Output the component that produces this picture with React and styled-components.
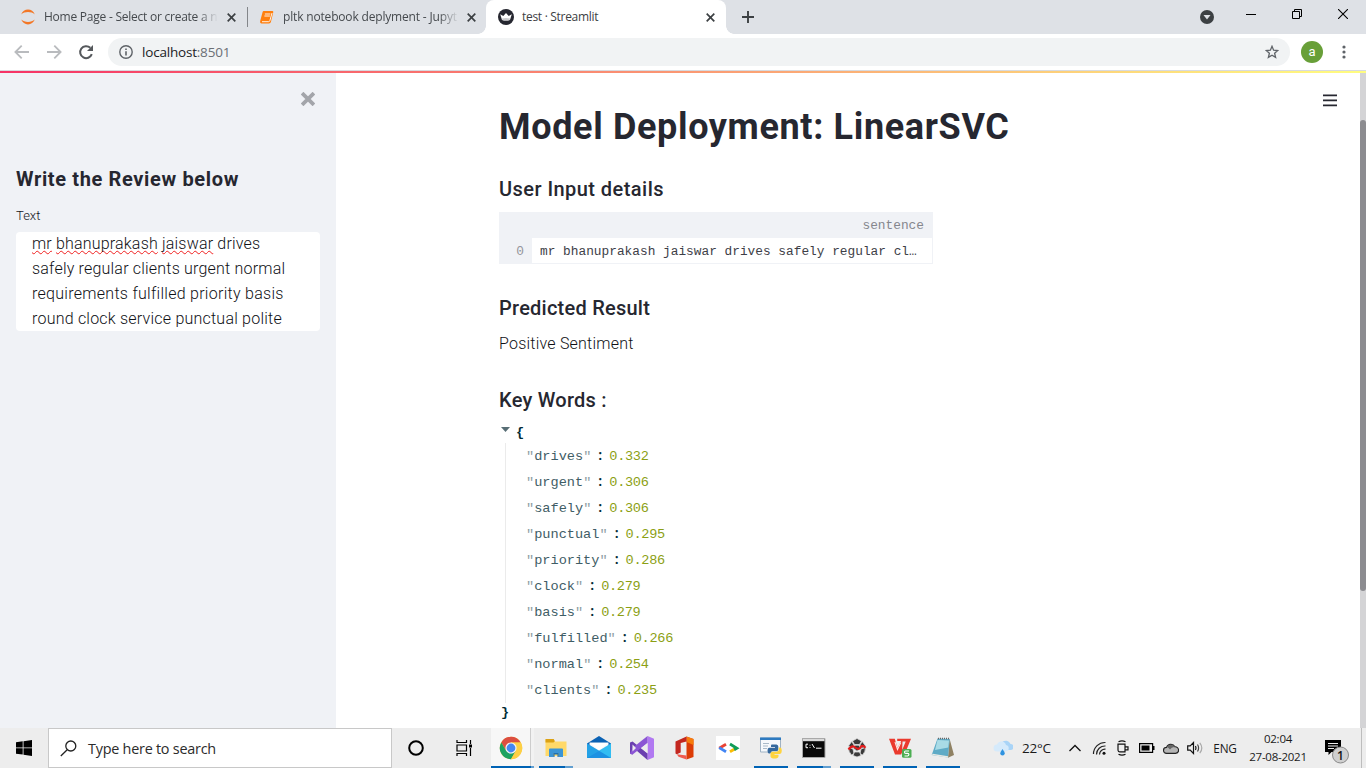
import React from 'react';
import styled, { createGlobalStyle, css } from 'styled-components';

const Global = createGlobalStyle`
  * { box-sizing: border-box; }
  body { margin: 0; overflow: hidden; background: #fff; }
  svg { display: block; flex: none; }
`;

const ui = css`font-family: 'Open Sans', 'Noto Sans', sans-serif;`;
const sans = css`font-family: Roboto, 'Noto Sans', sans-serif; color: #262730;`;
const mono = css`font-family: 'Liberation Mono', monospace;`;

const Screen = styled.div`
  width: 1366px;
  height: 768px;
  display: flex;
  flex-direction: column;
  overflow: hidden;
`;

/* ---------- browser ---------- */
const TabStrip = styled.header`
  ${ui}
  height: 34px;
  flex: none;
  display: flex;
  align-items: stretch;
  background: #dee1e6;
  font-size: 12px;
  color: #45494d;
`;
const Tab = styled.div`
  position: relative;
  width: ${p => p.$width}px;
  padding-left: ${p => p.$pad}px;
  display: flex;
  align-items: center;
  ${p => p.$active && css`
    background: #fff;
    border-radius: 8px 8px 0 0;
    color: #3c4043;
    &::before, &::after {
      content: '';
      position: absolute;
      bottom: 0;
      width: 8px;
      height: 8px;
    }
    &::before { left: -8px; background: radial-gradient(circle at 0 0, #dee1e6 7.5px, #fff 8px); }
    &::after { right: -8px; background: radial-gradient(circle at 100% 0, #dee1e6 7.5px, #fff 8px); }
  `}
`;
const TabTitle = styled.span`
  width: ${p => p.$width}px;
  margin: 0 ${p => p.$end || 10}px 0 ${p => p.$gap || 8}px;
  overflow: hidden;
  white-space: nowrap;
  line-height: 18px;
  letter-spacing: ${p => p.$track || -0.24}px;
  ${p => p.$fade && css`mask-image: linear-gradient(to right, #000 calc(100% - 20px), transparent);`}
`;
const TabDivider = styled.i`
  width: 1px;
  height: 20px;
  margin-top: 7px;
  background: #83868a;
`;
const NewTab = styled.div`
  margin-left: 16px;
  display: flex;
  align-items: center;
`;
const WindowControls = styled.div`
  margin-left: auto;
  display: flex;
  align-items: flex-start;
  padding: 9px 18px 0 0;
  gap: 36px;
  > :first-child { margin-right: -4px; }
`;
const Toolbar = styled.div`
  ${ui}
  height: 37px;
  flex: none;
  display: flex;
  align-items: center;
  padding: 0 17px 0 14px;
  border-bottom: 1px solid #d8dadf;
  background: #fff;
`;
const NavButtons = styled.div`
  display: flex;
  gap: 16px;
  margin-right: 14px;
`;
const Omnibox = styled.div`
  width: 1182px;
  height: 28px;
  border-radius: 14px;
  background: #f1f3f4;
  display: flex;
  align-items: center;
  padding: 0 11px 0 11px;
`;
const Url = styled.span`
  margin-left: 9px;
  flex: 1;
  font-size: 13.5px;
  letter-spacing: -0.2px;
  line-height: 20px;
  color: #202124;
`;
const Port = styled.span`color: #6b6f74;`;
const Avatar = styled.div`
  width: 22px;
  height: 22px;
  margin: 0 19px 0 11px;
  border-radius: 50%;
  background: #689f38;
  color: #fff;
  font: 400 13px/21px Roboto, sans-serif;
  text-align: center;
`;

/* ---------- page ---------- */
const RainbowBar = styled.div`
  height: 2px;
  flex: none;
  background: linear-gradient(90deg, #f63366, #fffd80);
`;
const Page = styled.div`
  height: 655px;
  flex: none;
  display: flex;
`;
const Sidebar = styled.aside`
  ${sans}
  width: 336px;
  padding: 19px 16px 0;
  background: #f0f2f6;
`;
const CloseRow = styled.div`
  display: flex;
  justify-content: flex-end;
  padding-right: 5px;
  height: 74px;
`;
const SideHeading = styled.h2`
  margin: 0;
  font-size: 20px;
  line-height: 26px;
  font-weight: 700;
  letter-spacing: 0.64px;
`;
const Label = styled.label`
  display: block;
  margin-top: 13px;
  font-size: 13px;
  line-height: 21px;
  font-weight: 350;
  color: #14151b;
`;
const TextArea = styled.div`
  height: 99px;
  margin-top: 6px;
  padding-left: 16px;
  border-radius: 4px;
  background: #fff;
  overflow: hidden;
  font-size: 16px;
  line-height: 25px;
  font-weight: 350;
  color: #101116;
`;
const Line = styled.div`
  letter-spacing: ${p => p.$track}px;
  white-space: nowrap;
  &:first-child { margin-top: -1px; }
`;
const Misspelt = styled.span`
  text-decoration: underline wavy #f02020 1px;
  text-underline-offset: 1px;
  text-decoration-skip-ink: none;
`;
const Main = styled.main`
  ${sans}
  position: relative;
  flex: 1;
  padding: 32px 0 0 163px;
`;
const MenuButton = styled.div`
  position: absolute;
  top: 20px;
  right: 23px;
`;
const Title = styled.h1`
  margin: 0;
  font-size: 36px;
  line-height: 44px;
  font-weight: 700;
  letter-spacing: 0.65px;
`;
const Heading = styled.h3`
  margin: ${p => p.$top}px 0 0;
  font-size: 20px;
  line-height: 26px;
  font-weight: 500;
  letter-spacing: ${p => p.$track}px;
`;
const Result = styled.p`
  margin: 10px 0 0;
  font-size: 16px;
  line-height: 26px;
  letter-spacing: 0.22px;
  font-weight: 350;
  color: #101116;
`;
const DataFrame = styled.div`
  ${mono}
  width: 434px;
  height: 52px;
  margin-top: 10px;
  display: grid;
  grid-template: 26px 26px / 33px 401px;
  background: #f0f2f6;
  font-size: 12.82px;
  line-height: 27px;
`;
const HeadCell = styled.div`
  text-align: right;
  padding-right: 9px;
  color: #85868d;
`;
const IndexCell = styled.div`
  text-align: right;
  padding-right: 8px;
  color: #95969c;
`;
const ValueCell = styled.div`
  padding-left: 8px;
  background: #fff;
  border: solid #f0f2f6;
  border-width: 0 1px 1px 0;
  color: #3d3e47;
  white-space: nowrap;
`;
const Json = styled.div`
  ${mono}
  margin-top: 8px;
  font-size: 13.6px;
  color: #002b36;
`;
const Brace = styled.div`
  height: 22px;
  line-height: 23px;
  display: flex;
  font-weight: 700;
  padding-left: 2px;
  svg { margin: 6px 6px 0 0; }
`;
const Entries = styled.div`
  margin-left: 6px;
  padding-left: 20px;
  border-left: 1px solid #ebebeb;
  height: 260px;
  margin-bottom: -2px;
`;
const Entry = styled.div`
  height: 26px;
  display: flex;
  line-height: 27px;
`;
const Key = styled.span`color: #3f5d66;`;
const Quote = styled.span`color: #8fa0a5;`;
const Colon = styled.span`
  width: 18px;
  text-align: center;
  font: 700 14px/25px Roboto, sans-serif;
`;
const Num = styled.span`color: #8c9f14; letter-spacing: -0.3px;`;
const ScrollTrack = styled.div`
  width: 6px;
  padding-top: 47px;
  background: #d4d4d6;
`;
const ScrollThumb = styled.div`
  height: 471px;
  border-radius: 3px;
  background: #8c8c90;
`;

/* ---------- taskbar ---------- */
const Taskbar = styled.footer`
  ${ui}
  height: 40px;
  flex: none;
  display: flex;
  background: #ededed;
  color: #1a1a1a;
`;
const Slot = styled.div`
  width: ${p => p.$width || 24}px;
  height: 40px;
  display: flex;
  align-items: center;
  justify-content: center;
`;
const NoticeSlot = styled(Slot)`
  padding-top: 7px;
`;
const SearchBox = styled.div`
  width: 344px;
  height: 40px;
  display: flex;
  align-items: center;
  gap: 11px;
  padding-left: 11px;
  background: #fff;
  border: 1px solid #c8c8c8;
  font-size: 14.4px;
  letter-spacing: -0.24px;
  color: #2b2b2b;
`;
const Apps = styled.div`
  display: flex;
  margin-left: 3px;
`;
const AppTile = styled.div`
  width: 43px;
  height: 40px;
  display: grid;
  grid-template-rows: 38px 2px;
  justify-items: center;
  align-items: center;
  > svg { margin-top: 1px; }
  ${p => p.$active && css`
    background: linear-gradient(90deg, #f7f7f7 39px, #cdcdcd 39px 40px, #f2f2f2 40px);
    > svg { margin-right: 4px; }
  `}
`;
const Running = styled.i`
  width: ${p => (p.$wide ? 43 : 34)}px;
  height: 2px;
  background: ${p => p.$wide
    ? 'linear-gradient(90deg, #0063b5 40px, #629fd0 40px)'
    : p.$stacked
      ? 'linear-gradient(90deg, #0063b5 26px, #629fd0 26px)'
      : '#0063b5'};
`;
const Tray = styled.div`
  margin-left: auto;
  display: flex;
`;
const Weather = styled.div`
  width: 78px;
  padding-left: 8px;
  display: flex;
  align-items: center;
  gap: 9px;
  font-size: 13.5px;
  letter-spacing: -0.2px;
`;
const Lang = styled(Slot)`font-size: 11.8px; letter-spacing: -0.2px;`;
const Clock = styled.div`
  width: 70px;
  text-align: center;
  font-size: 11.5px;
  line-height: 18px;
  letter-spacing: -0.25px;
  padding-top: 2px;
`;
const ShowDesktop = styled.div`
  width: 5px;
  border-left: 1px solid #bdbdbd;
`;

/* ---------- icons ---------- */
const Cross = ({ size = 9, width = 1.7, color = '#3c4043' }) => (
  <svg width={size} height={size} viewBox="0 0 9 9" stroke={color} strokeWidth={width}>
    <path d="M.7.7 8.3 8.3M8.3.7.7 8.3" />
  </svg>
);
const JupyterIcon = () => (
  <svg width="16" height="16" viewBox="0 0 16 16" fill="#f37726">
    <path d="M1.2 5.4C2.4 2.2 5 .6 8 .6s5.600 1.600 6.800 4.800C13 3.800 10.600 3 8 3S3 3.800 1.200 5.400ZM1.200 10.600C2.400 13.800 5 15.400 8 15.400s5.600-1.600 6.800-4.800C13 12.200 10.600 13 8 13s-5-.8-6.800-2.400Z" />
  </svg>
);
const NotebookIcon = () => (
  <svg width="14" height="13" viewBox="0 0 14 13">
    <path d="M3.700 0h8.500c.8 0 1.300.6 1 1.400L11 10.500c-.2 1.300-1 2-2.100 2H1.600C.3 12.500-.1 11.300.2 10L2.600 1C2.800.3 3.100 0 3.700 0Z" fill="#ff7f0e" />
    <path d="M4.900 3h5.500M4.400 5h5.500M2 10.700h6.500c.7 0 1.200-.4 1.400-1.100L12 2" fill="none" stroke="#fff" strokeWidth=".9" />
  </svg>
);
const CrownIcon = () => (
  <svg width="16" height="16" viewBox="0 0 16 16">
    <circle cx="8" cy="8" r="8" fill="#262730" />
    <path d="M2.200 5.300 5.300 7 8 3.900 10.700 7l3.100-1.700-1.800 5.600q-4 1-8 0Z" fill="#fff" />
    <path d="M4 9.500q4-1.200 8 0l-.3 1.400q-3.700 1-7.400 0Z" fill="#c9c9cc" />
  </svg>
);
const ArrowIcon = ({ flip }) => (
  <svg width="16" height="16" viewBox="0 0 16 16" fill="none" stroke="#b9bbbe" strokeWidth="1.800">
    <path d={flip ? 'M1 8h13M8.300 1.700 14.600 8l-6.300 6.300' : 'M15 8H2M7.700 1.700 1.400 8l6.300 6.300'} />
  </svg>
);
const ReloadIcon = () => (
  <svg width="16" height="16" viewBox="0 0 16 16">
    <path d="M13.800 10.200A6 6 0 1 1 12.300 3.800" fill="none" stroke="#55585c" strokeWidth="2" />
    <path d="M15 1v6H9Z" fill="#55585c" />
  </svg>
);
const InfoIcon = () => (
  <svg width="14" height="14" viewBox="0 0 14 14" fill="none" stroke="#5f6368" strokeWidth="1.400">
    <circle cx="7" cy="7" r="6.200" />
    <path d="M7 6.200v4.300M7 3.500v1.600" strokeWidth="1.600" />
  </svg>
);
const StarIcon = () => (
  <svg width="14" height="14" viewBox="0 0 14 14" fill="none" stroke="#5f6368" strokeWidth="1.300">
    <path d="m7 1.300 1.600 3.900 4.200.3-3.200 2.700 1 4.200L7 10.200l-3.600 2.200 1-4.200L1.200 5.500l4.200-.3Z" />
  </svg>
);
const DotsIcon = () => (
  <svg width="4" height="14" viewBox="0 0 4 14" fill="#5f6368">
    <circle cx="2" cy="2" r="1.600" /><circle cx="2" cy="7" r="1.600" /><circle cx="2" cy="12" r="1.600" />
  </svg>
);

const ChromeIcon = () => (
  <svg width="24" height="24" viewBox="0 0 24 24">
    <circle cx="12" cy="12" r="11.200" fill="#fbc93d" />
    <path d="M2.300 6.400A11.200 11.200 0 0 1 21.700 6.400H12L7.150 14.800Z" fill="#dc4e41" />
    <path d="M2.300 6.400A11.200 11.200 0 0 0 12 23.200L16.850 14.800 12 17.600 7.150 14.800Z" fill="#1da261" />
    <path d="M12 6.400h9.700A11.200 11.200 0 0 1 12 23.200l4.850-8.400Z" fill="#fdd045" />
    <circle cx="12" cy="12" r="5.600" fill="#f4f4f4" />
    <circle cx="12" cy="12" r="4.400" fill="#4587f3" />
  </svg>
);
const ExplorerIcon = () => (
  <svg width="22" height="20" viewBox="0 0 22 20">
    <path d="M.5 1.500h8l1.500 2h11.500V18H.5Z" fill="#ffd969" />
    <path d="M.5 1h8.300l1 2.200-1.300 1.200h-8Z" fill="#dca215" />
    <path d="M4 19v-7.500q0-1 1-1h12q1 0 1 1V19h-4.300v-4H8.300v4Z" fill="#3b95d6" />
    <path d="M8.300 19v-4h5.400v4h-1.200v-2.500H9.500V19Z" fill="#1f6fb0" />
  </svg>
);
const MailIcon = () => (
  <svg width="24" height="23" viewBox="0 0 24 23">
    <path d="M0 7.500 12 0l12 7.500V22H0Z" fill="#0b62b4" />
    <path d="M2.500 6.700h19V15h-19Z" fill="#f7f9fb" />
    <path d="M24 7.500V22H0Z" fill="#32bdf2" />
    <path d="M0 7.500 24 22H0Z" fill="#1c91e2" />
    <path d="M0 7.500 12 14.700 24 7.500V8L0 22Z" fill="#29aeea" opacity=".55" />
    <path d="M2.500 6.700h19L12 14Z" fill="#fff" />
  </svg>
);
const VisualStudioIcon = () => (
  <svg width="24" height="24" viewBox="0 0 24 24">
    <path d="M17.500 0 24 2.700v18.600L17.500 24Z" fill="#b179f1" />
    <path d="M0 6.500 2.600 5.400 17.500 17.500V24L3 11.500 2.500 16.500v2.200L0 17.500Z" fill="#6b3fb0" />
    <path d="M2.600 18.600 0 17.500l3-6L17.500 0v7Z" fill="#8b55d4" />
    <path d="M2.500 8.500v7L6 12Z" fill="#ededed" />
    <path d="M17.500 7v10L11.300 12Z" fill="#ededed" />
  </svg>
);
const OfficeIcon = () => (
  <svg width="19" height="24" viewBox="0 0 19 24">
    <path d="M11.500.5 18.500 3v18l-7 2.500Z" fill="#dc3c06" />
    <path d="M11.500.5 18.500 3v6l-7-3Z" fill="#f77c0b" />
    <path d="M.5 5.500 11.500.5v5L5.700 7v9.500L1.800 18.300.5 17.500Z" fill="#c3271f" />
    <path d="m1.800 18.300 9.700 1.200v4L3.500 20.700Z" fill="#ef5b4f" />
  </svg>
);
const CodeIcon = () => (
  <svg width="24" height="24" viewBox="0 0 24 24" fill="none" strokeWidth="2.800">
    <path d="M0 0h24v24H0Z" fill="#fff" />
    <path d="M10 8.200 3.200 12.200" stroke="#e94335" />
    <path d="m3.200 11.600 6.800 4.200" stroke="#4285f4" />
    <path d="m14 15.700 6.800-4" stroke="#fbbc05" />
    <path d="m14 8 6.800 4.200-2.600 1.500" stroke="#109d58" />
  </svg>
);
const PythonIcon = () => (
  <svg width="22" height="22" viewBox="0 0 22 22">
    <path d="M.5 1h20v14H.5Z" fill="#f6f9fc" stroke="#9fb2c4" />
    <path d="M0 .5h21V3H0Z" fill="#2d7ac0" />
    <path d="M3 6.500h6M3 9h5M3 11.500h4" stroke="#a9bac9" />
    <path d="M11.500 7.500h5q1.800.3 1.800 2v3q0 1.500-1.700 1.500h-4q-2 0-2.200 2.500H9q-1.500-.5-1.500-3T9 10.800h6V10h-4V8.500Z" fill="#35699e" />
    <path d="M18.800 10.500h1.500q1.500.5 1.500 3.300T20 17h-5.500v.8h4v1.700q-.5 2-4 2t-4-2v-3q.2-1.700 2-1.700h4.200q2-.3 2.100-2.300Z" fill="#ffd43f" />
  </svg>
);
const TerminalIcon = () => (
  <svg width="24" height="20" viewBox="0 0 24 20">
    <path d="M.5.5h22.500v19H.5Z" fill="#0a0a0a" stroke="#a9a9a9" />
    <path d="M1 1h21.500v2.200H1Z" fill="#d9d9d9" />
    <path d="M6 6.200H4v3.500h2M8 6.800v.8M8 9v.8M10 6l2.500 4M14 10.200h5.500" stroke="#fff" fill="none" />
  </svg>
);
const ClusterIcon = () => (
  <svg width="20" height="22" viewBox="0 0 20 22">
    <g fill="#3a3a3a" stroke="#d8d8d8" strokeWidth=".8">
      <path d="M10 1.500 14.500 4 12.500 7.500h-5L5.500 4Z" />
      <path d="M15.300 4.500 18.500 9l-3.800 2.500L13 8Z" />
      <path d="M4.700 4.500 1.500 9l3.800 2.500L7 8Z" />
      <path d="M1.500 10.500 6 12l1 4.500L4.500 18Q1.500 15 1.500 10.500ZM18.500 10.500 14 12l-1 4.500 2.500 1.500Q18.500 15 18.500 10.500Z" />
      <path d="M7.500 15h5l1.500 3.500-4 1.500-4-1.500ZM8 8.200h4l1.500 3-3.500 3-3.500-3Z" />
    </g>
    <path d="M1.500 12.500q3.500-4.500 6-2.500t4 1.800 2.800-2.600q1.700-1.200 4.200 1.500" fill="none" stroke="#e31b1b" strokeWidth="2.200" />
  </svg>
);
const WpsIcon = () => (
  <svg width="24" height="21" viewBox="0 0 24 21">
    <path d="M1 1.800h5.800L9.500 11l3.700-7h-4V1.800H23L18.800 12H15l3-7-4.800 12.500H7Z" fill="#ea3a2e" />
    <path d="M14.500 4.500h3.200l-3.500 8.500Z" fill="#ededed" />
    <path d="m7 5 2.500 7.500 3.300-7" fill="none" stroke="#ffe4e0" strokeWidth="1.100" />
    <rect x="14" y="12" width="9.500" height="8.800" rx="1.500" fill="#4cae52" />
    <path d="M21 14h-3.500q-1 0-1 1.200t1.200 1.200h2q1.200 0 1.200 1.200T19.700 19h-3.200" fill="none" stroke="#fff" strokeWidth="1.100" />
  </svg>
);
const NotepadIcon = () => (
  <svg width="24" height="22" viewBox="0 0 24 22">
    <path d="m18.500 1.500 4.500 16.500-6 2.700Z" fill="#8f8163" />
    <path d="M6.500 1.500 18.800 2 17 20.500.7 18Z" fill="#5fabc6" />
    <path d="M6.500 3 18 3.500l-.7 7L4 13Z" fill="#a9dbe6" />
    <path d="m1 18 16 2.700.2-1.500L1.600 16.800Z" fill="#e9e9e4" />
    <path d="M7 1.500h11.500" stroke="#666" strokeWidth="1.600" strokeDasharray="1 1" />
  </svg>
);

const tiles = [
  { id: 'chrome', icon: <ChromeIcon />, running: true, active: true },
  { id: 'files', icon: <ExplorerIcon />, running: true, stacked: true },
  { id: 'mail', icon: <MailIcon /> },
  { id: 'vs', icon: <VisualStudioIcon /> },
  { id: 'office', icon: <OfficeIcon /> },
  { id: 'code', icon: <CodeIcon /> },
  { id: 'python', icon: <PythonIcon />, running: true },
  { id: 'cmd', icon: <TerminalIcon />, running: true, stacked: true },
  { id: 'cluster', icon: <ClusterIcon />, running: true },
  { id: 'wps', icon: <WpsIcon />, running: true },
  { id: 'notepad', icon: <NotepadIcon />, running: true },
];

const keywords = [
  ['drives', '0.332'], ['urgent', '0.306'], ['safely', '0.306'], ['punctual', '0.295'],
  ['priority', '0.286'], ['clock', '0.279'], ['basis', '0.279'], ['fulfilled', '0.266'],
  ['normal', '0.254'], ['clients', '0.235'],
];

const Browser = () => (
  <>
    <TabStrip>
      <Tab $width={247} $pad={20}>
        <JupyterIcon />
        <TabTitle $width={174} $end={9} $fade>Home Page - Select or create a n</TabTitle>
        <Cross />
      </Tab>
      <TabDivider />
      <Tab $width={238} $pad={12}>
        <NotebookIcon />
        <TabTitle $width={176} $gap={9} $end={8} $track={-0.17} $fade>pltk notebook deplyment - Jupyt</TabTitle>
        <Cross />
      </Tab>
      <Tab $width={240} $pad={12} $active>
        <CrownIcon />
        <TabTitle $width={174} $track={-0.3}>test · Streamlit</TabTitle>
        <Cross />
      </Tab>
      <NewTab>
        <svg width="12" height="12" viewBox="0 0 12 12" stroke="#3c4043" strokeWidth="1.900"><path d="M6 0v12M0 6h12" /></svg>
      </NewTab>
      <WindowControls>
        <svg width="14" height="15" viewBox="0 0 14 15"><circle cx="7" cy="8" r="7" fill="#3c4043" /><path d="M3.500 6h7L7 10.500Z" fill="#dee1e6" /></svg>
        <svg width="10" height="10" viewBox="0 0 10 10"><path d="M0 5.500h10" stroke="#000" /></svg>
        <svg width="10" height="10" viewBox="0 0 10 10" fill="none" stroke="#000"><path d="M.5 2.500h7v7h-7ZM2.500 2.500v-2h7v7h-2" /></svg>
        <svg width="10" height="10" viewBox="0 0 10 10" stroke="#000" strokeWidth="1.100"><path d="m0 0 10 10M10 0 0 10" /></svg>
      </WindowControls>
    </TabStrip>
    <Toolbar>
      <NavButtons><ArrowIcon /><ArrowIcon flip /><ReloadIcon /></NavButtons>
      <Omnibox>
        <InfoIcon />
        <Url>localhost<Port>:8501</Port></Url>
        <StarIcon />
      </Omnibox>
      <Avatar>a</Avatar>
      <DotsIcon />
    </Toolbar>
  </>
);

const ReviewSidebar = () => (
  <Sidebar>
    <CloseRow><Cross size={14} width={2.400} color="#a3a5aa" /></CloseRow>
    <SideHeading>Write the Review below</SideHeading>
    <Label>Text</Label>
    <TextArea>
      <Line $track={0.18}><Misspelt>mr</Misspelt> <Misspelt>bhanuprakash</Misspelt> <Misspelt>jaiswar</Misspelt> drives</Line>
      <Line $track={0.2}>safely regular clients urgent normal</Line>
      <Line $track={0.28}>requirements fulfilled priority basis</Line>
      <Line $track={0.22}>round clock service punctual polite</Line>
    </TextArea>
  </Sidebar>
);

const Results = () => (
  <Main>
    <MenuButton>
      <svg width="14" height="14" viewBox="0 0 14 14" stroke="#262730" strokeWidth="1.700"><path d="M0 2.300h14M0 7.300h14M0 12.300h14" /></svg>
    </MenuButton>
    <Title>Model Deployment: LinearSVC</Title>
    <Heading $top={27} $track={0.45}>User Input details</Heading>
    <DataFrame>
      <IndexCell />
      <HeadCell>sentence</HeadCell>
      <IndexCell>0</IndexCell>
      <ValueCell>mr bhanuprakash jaiswar drives safely regular cl…</ValueCell>
    </DataFrame>
    <Heading $top={31} $track={0.24}>Predicted Result</Heading>
    <Result>Positive Sentiment</Result>
    <Heading $top={30} $track={0.25}>Key Words :</Heading>
    <Json>
      <Brace>
        <svg width="9" height="5" viewBox="0 0 9 5"><path d="M0 0h9L4.500 5Z" fill="#586e75" /></svg>
        {'{'}
      </Brace>
      <Entries>
        {keywords.map(([word, score]) => (
          <Entry key={word}>
            <Key><Quote>"</Quote>{word}<Quote>"</Quote></Key>
            <Colon>:</Colon>
            <Num>{score}</Num>
          </Entry>
        ))}
      </Entries>
      <Brace>{'}'}</Brace>
    </Json>
  </Main>
);

const SystemBar = () => (
  <Taskbar>
    <Slot $width={48}>
      <svg width="16" height="16" viewBox="0 0 16 16"><path d="M0 2.200 6.700 1.300v6.200H0ZM7.500 1.200 16 0v7.500H7.500ZM0 8.300h6.700v6.300L0 13.700ZM7.500 8.300H16V16l-8.500-1.200Z" /></svg>
    </Slot>
    <SearchBox>
      <svg width="17" height="17" viewBox="0 0 17 17" fill="none" stroke="#222" strokeWidth="1.300"><circle cx="10.800" cy="6" r="5" /><path d="M7.200 9.700.8 16" /></svg>
      Type here to search
    </SearchBox>
    <Slot $width={48}>
      <svg width="16" height="16" viewBox="0 0 16 16"><circle cx="8" cy="8" r="6.800" fill="none" stroke="#000" strokeWidth="2" /></svg>
    </Slot>
    <Slot $width={48}>
      <svg width="17" height="16" viewBox="0 0 17 16" fill="none" stroke="#000" strokeWidth="1.200"><path d="M1 0v2.500h9.500V0M1 5h9.500v6H1ZM1 16v-2.500h9.500V16M14.500 0v4M14.500 8v8" /><path d="M13 4.500h3v3h-3Z" fill="#000" stroke="none" /></svg>
    </Slot>
    <Apps>
      {tiles.map(t => (
        <AppTile key={t.id} $active={t.active}>
          {t.icon}
          {t.running && <Running $wide={t.active} $stacked={t.stacked} />}
        </AppTile>
      ))}
    </Apps>
    <Tray>
      <Weather>
        <svg width="20" height="16" viewBox="0 0 20 16">
          <path d="M8 10a4 4 0 0 1 1-7.500A5 5 0 0 1 17.500 4a3 3 0 0 1 0 6Z" fill="#a9d4f7" />
          <path d="M4 11.500a3.500 3.500 0 0 1 0-7A4.800 4.800 0 0 1 13 5a3.300 3.300 0 0 1 0 6.500Z" fill="#d5eafb" />
          <path d="M9.500 9q2.200 3 2.200 4.300a2.200 2.200 0 0 1-4.400 0q0-1.300 2.200-4.300Z" fill="#2f93e0" />
        </svg>
        22°C
      </Weather>
      <Slot><svg width="12" height="8" viewBox="0 0 12 8" fill="none" stroke="#111" strokeWidth="1.300"><path d="m.5 7 5.500-5.500L11.500 7" /></svg></Slot>
      <Slot>
        <svg width="14" height="14" viewBox="0 0 14 14" fill="none" stroke="#222" strokeWidth="1.200"><path d="M1.500 13A11.500 11.500 0 0 1 13.500 1.500M4.500 13.500A8.500 8.500 0 0 1 13.500 5M7.500 13.500a5.500 5.500 0 0 1 6-5.300" /><circle cx="12" cy="12.300" r="1.500" fill="#111" stroke="none" /></svg>
      </Slot>
      <Slot>
        <svg width="13" height="16" viewBox="0 0 13 16" fill="none" stroke="#111" strokeWidth="1.200"><path d="M1.500 1.800Q5 0 8.500 1.800M1.500 14.200q3.500 1.800 7 0M1 4.200h7v7.600H3Q1 11.800 1 9.800ZM8 6.800h3v3H8" /></svg>
      </Slot>
      <Slot>
        <svg width="16" height="10" viewBox="0 0 16 10"><path d="M.6.6h13v8.800H.6Z" fill="none" stroke="#000" strokeWidth="1.200" /><path d="M2.500 2.500h8v5h-8ZM14 3h1.500v4H14Z" /></svg>
      </Slot>
      <Slot>
        <svg width="16" height="11" viewBox="0 0 16 11"><path d="M3.500 10.400a3 3 0 0 1 0-6A4.700 4.700 0 0 1 12 3.800a3.300 3.300 0 0 1 .5 6.600Z" fill="#b5b5b5" stroke="#222" strokeWidth="1.100" /><path d="M4 4Q7-1 12 3.800 8 4.500 7 6.500 5.500 4.500 4 4Z" fill="#666" /></svg>
      </Slot>
      <Slot>
        <svg width="17" height="14" viewBox="0 0 17 14" fill="none" stroke="#111" strokeWidth="1.200"><path d="M.7 4.800h2.500L6.500 1.500v11L3.200 9.200H.7ZM8.500 5q1 2 0 4" /><path d="M10.500 3.500q2.200 3.500 0 7" stroke="#444" /><path d="M12.800 1.800q4 5.200 0 10.400" stroke="#aaa" /></svg>
      </Slot>
      <Lang $width={36}>ENG</Lang>
      <Clock>02:04<br />27-08-2021</Clock>
      <NoticeSlot $width={48}>
        <svg width="25" height="26" viewBox="0 0 25 26">
          <path d="M0 1h16v12H6.500L3.500 16v-3H0Z" fill="#000" />
          <path d="M3 4.500h10M3 7h10M3 9.500h6" stroke="#ededed" strokeWidth="1.200" />
          <circle cx="15.500" cy="16" r="8" fill="#cfcfcf" stroke="#8a8a8a" />
          <text x="15.500" y="20.500" textAnchor="middle" fontFamily="Open Sans, sans-serif" fontSize="12" fontWeight="600" fill="#111">1</text>
        </svg>
      </NoticeSlot>
      <ShowDesktop />
    </Tray>
  </Taskbar>
);

export default function App() {
  return (
    <Screen>
      <Global />
      <Browser />
      <RainbowBar />
      <Page>
        <ReviewSidebar />
        <Results />
        <ScrollTrack><ScrollThumb /></ScrollTrack>
      </Page>
      <SystemBar />
    </Screen>
  );
}
